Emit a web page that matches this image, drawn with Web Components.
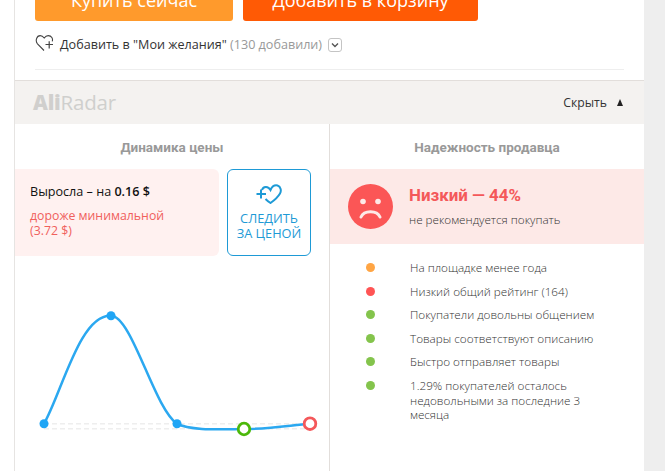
<!DOCTYPE html>
<html>
<head>
<meta charset="utf-8">
<style>
  html, body { margin: 0; padding: 0; background: #fff; overflow: hidden; height: 471px; }
  body { font-family: "Open Sans", sans-serif; }
</style>
</head>
<body>
<product-card>
  <buy-buttons></buy-buttons>
  <wish-line></wish-line>
  <radar-panel>
    <price-column slot="left"></price-column>
    <seller-column slot="right">
      <status-item color="#ffa544">На площадке менее года</status-item>
      <status-item color="#ff5454">Низкий общий рейтинг (164)</status-item>
      <status-item color="#84c44c">Покупатели довольны общением</status-item>
      <status-item color="#84c44c">Товары соответствуют описанию</status-item>
      <status-item color="#84c44c">Быстро отправляет товары</status-item>
      <status-item color="#84c44c">1.29% покупателей осталось недовольными за последние 3 месяца</status-item>
    </seller-column>
  </radar-panel>
</product-card>

<script>
class ProductCard extends HTMLElement {
  constructor() {
    super();
    this.attachShadow({ mode: 'open' });
    this.shadowRoot.innerHTML = `
      <style>
        :host { display: block; width: 665px; height: 471px; box-sizing: border-box; padding-left: 14px; padding-right: 21px; background: linear-gradient(to right, #fff 644px, #eee 644px); overflow: hidden; }
        .card { display: flow-root; height: 100%; border-left: 1px solid #e6e4e2; background: #fff; box-sizing: border-box; }
      </style>
      <div class="card"><slot></slot></div>
    `;
  }
}

class BuyButtons extends HTMLElement {
  constructor() {
    super();
    this.attachShadow({ mode: 'open' });
    this.shadowRoot.innerHTML = `
      <style>
        :host { display: flex; gap: 10px; margin: -20px 0 0 20px; height: 41px; }
        .btn { height: 41px; border-radius: 0 0 3px 3px; color: #fff; font-size: 18px; line-height: 41px; text-align: center; }
        .one { width: 198px; background: #ff9a2c; }
        .two { width: 235px; background: #ff5a05; }
      </style>
      <div class="btn one">Купить сейчас</div>
      <div class="btn two">Добавить в корзину</div>
    `;
  }
}

class WishLine extends HTMLElement {
  constructor() {
    super();
    this.attachShadow({ mode: 'open' });
    this.shadowRoot.innerHTML = `
      <style>
        :host { display: flex; align-items: flex-start; margin: 13px 20px 0 20px; height: 35px; border-bottom: 1px solid #eee; font-size: 12.6px; color: #333; }
        svg { flex: none; width: 19px; height: 18px; margin: 0 6px 0 0; }
        .txt { line-height: 22px; white-space: nowrap; }
        .gray { color: #999; }
        .box { width: 12px; height: 12px; margin: 4px 0 0 6px; border: 1px solid #c4c4c4; border-radius: 3px; display: flex; align-items: center; justify-content: center; }
        .box svg { width: 8px; height: 6px; margin: 0; }
      </style>
      <svg viewBox="0 0 19 18" fill="none" stroke="#444" stroke-width="1.1">
        <path d="M9 16.5 L2.5 9.8 C0 7 1.6 1.6 5.2 1.6 C7 1.6 8.2 2.6 9.2 4 C10.2 2.6 11.4 1.6 13.2 1.6 C16.6 1.6 18.2 4.8 17.2 7.4"/>
        <path d="M10.5 10.5 H18 M14.2 7.3 V14.5" stroke-width="1.2"/>
      </svg>
      <span class="txt">Добавить в "Мои желания" <span class="gray">(130 добавили)</span></span>
      <span class="box"><svg viewBox="0 0 8 6" fill="none" stroke="#555" stroke-width="1.4"><path d="M1 1.5 L4 4.5 L7 1.5"/></svg></span>
    `;
  }
}

class RadarPanel extends HTMLElement {
  constructor() {
    super();
    this.attachShadow({ mode: 'open' });
    this.shadowRoot.innerHTML = `
      <style>
        :host { display: block; margin-top: 10px; width: 629px; }
        .head { height: 43px; border-top: 1px solid #e2dedb; background: #f4f2f0; display: flex; align-items: center; justify-content: space-between; padding: 0 21px 0 18px; }
        .logo { font-size: 20.5px; letter-spacing: -0.2px; color: #cfcfcd; line-height: 1; }
        .logo b { font-weight: 800; color: #d0cfcd; }
        .hide { font-size: 12.2px; color: #333; display: flex; align-items: center; gap: 10px; }
        .tri { width: 0; height: 0; border-left: 3.5px solid transparent; border-right: 3.5px solid transparent; border-bottom: 7px solid #222; }
        .cols { display: grid; grid-template-columns: 315px 314px; height: 347px; }
        .left { border-right: 1px solid #e2dedb; }
      </style>
      <div class="head">
        <div class="logo"><b>Ali</b>Radar</div>
        <div class="hide">Скрыть <span class="tri"></span></div>
      </div>
      <div class="cols">
        <div class="left"><slot name="left"></slot></div>
        <div class="right"><slot name="right"></slot></div>
      </div>
    `;
  }
}

class PriceColumn extends HTMLElement {
  constructor() {
    super();
    this.attachShadow({ mode: 'open' });
    this.shadowRoot.innerHTML = `
      <style>
        :host { display: block; }
        h3 { margin: 0; height: 45px; line-height: 46px; text-align: center; font-family: Roboto, sans-serif; font-size: 13.5px; font-weight: 700; color: #999; }
        .row { display: flex; gap: 8px; height: 87px; }
        .info { width: 204px; box-sizing: border-box; background: #fff1f0; border-radius: 0 6px 6px 0; padding: 14px 15px; }
        .rise { font-size: 12.6px; color: #111; line-height: 18px; }
        .rise b { font-weight: 600; }
        .min { margin-top: 7px; font-size: 12.3px; line-height: 15.4px; color: #f0605c; }
        .follow { width: 84px; box-sizing: border-box; border: 1px solid #1e9ad6; border-radius: 6px; color: #1e9ad6; font-size: 12.8px; line-height: 15px; text-align: center; display: flex; flex-direction: column; align-items: center; padding-top: 13px; }
        .follow svg { width: 28px; height: 21px; margin-bottom: 7px; flex: none; }
      </style>
      <h3>Динамика цены</h3>
      <div class="row">
        <div class="info">
          <div class="rise">Выросла – на <b>0.16 $</b></div>
          <div class="min">дороже минимальной<br>(3.72 $)</div>
        </div>
        <div class="follow">
          <svg viewBox="0 0 28 21" fill="none" stroke="#1e9ad6" stroke-width="2">
            <path d="M7 7 C8 3.5 13 2.5 15.5 7 C17 3.5 20 2 22.5 2.5 C26 3.5 26.5 8 25 10.5 C23 14 19 17.5 15.5 20 C14 19 12 17.5 10.5 16"/>
            <path d="M1.5 11 H11 M6 6.5 V15.5"/>
          </svg>
          <span>СЛЕДИТЬ</span>
          <span>ЗА ЦЕНОЙ</span>
        </div>
      </div>
      <trend-chart></trend-chart>
    `;
  }
}

class TrendChart extends HTMLElement {
  constructor() {
    super();
    this.attachShadow({ mode: 'open' });
    // viewBox starts at the column's top-left so points read as page coords
    this.shadowRoot.innerHTML = `
      <style>
        :host { display: block; height: 190px; }
        svg { display: block; }
      </style>
      <svg width="314" height="190" viewBox="15 256 314 190">
        <path d="M44 423.7 H310 M44 428.7 H310" stroke="#eee" stroke-width="1.5" stroke-dasharray="5 3" fill="none"/>
        <path d="M44 423.7 C62 392 80 314 111 315.7 C132 316 154 408 177 423.7 C190 431 222 429.2 244 429 C270 429 292 425 310 423.7" fill="none" stroke="#2ba8f0" stroke-width="2.5"/>
        <circle cx="44" cy="423.7" r="4.5" fill="#1fa5f5"/>
        <circle cx="111" cy="315.7" r="4.5" fill="#1fa5f5"/>
        <circle cx="177" cy="423.7" r="4.5" fill="#1fa5f5"/>
        <circle cx="244" cy="429" r="5.8" fill="#fff" stroke="#4cb80a" stroke-width="2.8"/>
        <circle cx="310" cy="423.7" r="5.8" fill="#fff" stroke="#f4585a" stroke-width="2.8"/>
      </svg>
    `;
  }
}

class SellerColumn extends HTMLElement {
  constructor() {
    super();
    this.attachShadow({ mode: 'open' });
    this.shadowRoot.innerHTML = `
      <style>
        :host { display: block; }
        h3 { margin: 0; height: 45px; line-height: 46px; text-align: center; font-family: Roboto, sans-serif; font-size: 13.5px; font-weight: 700; color: #999; }
        .banner { height: 75px; background: #fde9e7; display: flex; align-items: center; padding-left: 18px; gap: 16px; }
        svg { width: 45px; height: 45px; flex: none; }
        .score { font-family: Roboto, sans-serif; font-size: 16.9px; font-weight: 700; color: #f4585a; line-height: 20px; margin: -2px 0 6px; }
        .note { font-size: 11.7px; font-weight: 300; color: #333; line-height: 16px; }
        .list { padding-top: 16px; display: flex; flex-direction: column; gap: 8.9px; }
      </style>
      <h3>Надежность продавца</h3>
      <div class="banner">
        <svg viewBox="0 0 45 45">
          <circle cx="22.5" cy="22.5" r="22.5" fill="#fb5656"/>
          <circle cx="15" cy="17.5" r="2.8" fill="#fde9e7"/>
          <circle cx="30" cy="17.5" r="2.8" fill="#fde9e7"/>
          <path d="M13 33 C16 26 29 26 32 33" fill="none" stroke="#fde9e7" stroke-width="3" stroke-linecap="round"/>
        </svg>
        <div>
          <div class="score">Низкий — 44%</div>
          <div class="note">не рекомендуется покупать</div>
        </div>
      </div>
      <div class="list"><slot></slot></div>
    `;
  }
}

class StatusItem extends HTMLElement {
  constructor() {
    super();
    this.attachShadow({ mode: 'open' });
    const color = this.getAttribute('color');
    this.shadowRoot.innerHTML = `
      <style>
        :host { display: flex; padding-left: 36px; font-size: 11.7px; font-weight: 300; color: #333; line-height: 14.7px; }
        .dot { flex: none; width: 9px; height: 9px; border-radius: 50%; margin: 3px 35px 0 0; background: ${color}; }
        .text { width: 195px; }
      </style>
      <span class="dot"></span>
      <span class="text"><slot></slot></span>
    `;
  }
}

customElements.define('product-card', ProductCard);
customElements.define('buy-buttons', BuyButtons);
customElements.define('wish-line', WishLine);
customElements.define('radar-panel', RadarPanel);
customElements.define('price-column', PriceColumn);
customElements.define('trend-chart', TrendChart);
customElements.define('seller-column', SellerColumn);
customElements.define('status-item', StatusItem);
</script>
</body>
</html>
